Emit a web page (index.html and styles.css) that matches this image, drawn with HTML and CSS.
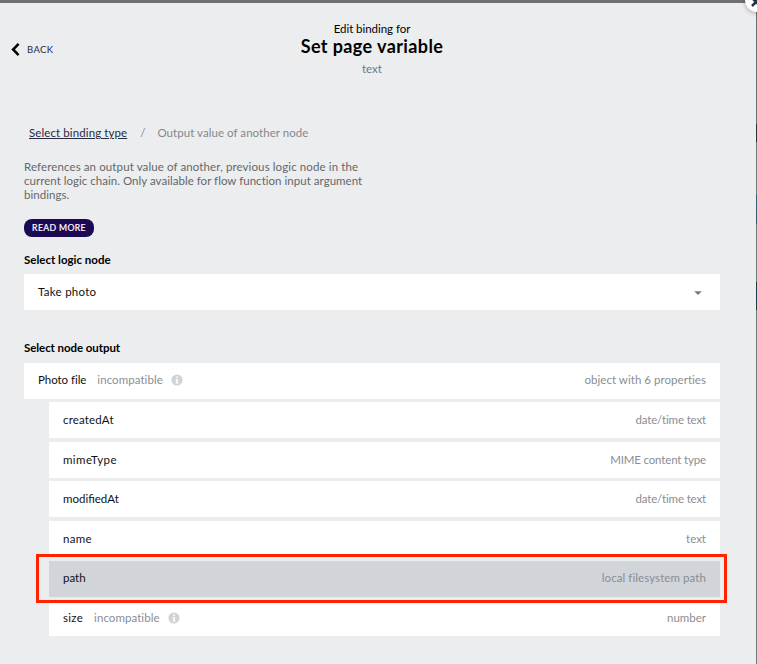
FILE: index.html
```html
<!DOCTYPE html>
<html lang="en">
<head>
<meta charset="utf-8">
<title>Edit binding</title>
<link rel="stylesheet" href="styles.css">
</head>
<body>
<div class="backdrop">
  <main class="modal">
    <header class="header">
      <a class="back"><svg class="chevron" viewBox="0 0 9 13"><path d="M7.6.9 2.1 6.5l5.5 5.6" fill="none" stroke="#000" stroke-width="2.5"/></svg><span>BACK</span></a>
      <div class="heading">
        <div class="eyebrow">Edit binding for</div>
        <h1 class="title">Set page variable</h1>
        <div class="type">text</div>
      </div>
    </header>
    <nav class="crumbs"><a class="crumb-link">Select binding type</a><span class="slash">/</span><span class="crumb-current">Output value of another node</span></nav>
    <p class="description"><span class="opening">References an output value of another, previous logic node in the</span><br>current logic chain. Only available for flow function input argument<br>bindings.</p>
    <button class="more">READ MORE</button>
    <h2 class="label">Select logic node</h2>
    <div class="select"><span class="name take">Take photo</span><svg class="caret" viewBox="0 0 8 4"><path d="M.2.2h7.6L4 4z" fill="#73757f"/></svg></div>
    <h2 class="label output-label">Select node output</h2>
    <div class="outputs">
      <div class="row parent"><span class="name photo">Photo file</span><span class="note">incompatible</span><svg class="info" viewBox="0 0 12 12"><circle cx="6" cy="6" r="5.6" fill="#d0d3d8"/><path d="M5.2 2.3h1.7v1.5H5.2zM4.6 4.9h2.3v3.5h.7v1H4.5v-1h.8V5.8h-.7z" fill="#fff"/></svg><span class="kind k-object">object with 6 properties</span></div>
      <div class="row"><span class="name created">createdAt</span><span class="kind k-date">date/time text</span></div>
      <div class="row"><span class="name mime">mimeType</span><span class="kind k-mime">MIME content type</span></div>
      <div class="row"><span class="name">modifiedAt</span><span class="kind k-date">date/time text</span></div>
      <div class="row"><span class="name short">name</span><span class="kind">text</span></div>
      <div class="row selected"><span class="name">path</span><span class="kind k-path">local filesystem path</span></div>
      <div class="row"><span class="name short">size</span><span class="note">incompatible</span><svg class="info" viewBox="0 0 12 12"><circle cx="6" cy="6" r="5.6" fill="#d0d3d8"/><path d="M5.2 2.3h1.7v1.5H5.2zM4.6 4.9h2.3v3.5h.7v1H4.5v-1h.8V5.8h-.7z" fill="#fff"/></svg><span class="kind">number</span></div>
    </div>
  </main>
  <div class="close"><svg viewBox="0 0 10 10"><path d="m1 1 8 8M9 1 1 9" stroke="#263342" stroke-width="2.5"/></svg></div>
  <div class="highlight"></div>
</div>
</body>
</html>
```

FILE: styles.css
```css
* { box-sizing: border-box; }
body { margin: 0; font: 11.5px/14px Lato, "Open Sans", sans-serif; color: #111; }
.backdrop { position: relative; height: 664px; overflow: hidden; padding: 3px 1px 0 0;
  background: linear-gradient(#707072 124px, #303036 124px 142px, #77797c 142px 195px, #326078 195px 210px, #405469 210px 224px, #77797c 224px 282px, #23384b 282px 310px, #77797c 310px); }
.modal { height: 661px; background: #ecedef; padding: 0 36px 0 24px; }
.header { position: relative; height: 123px; padding-top: 19px; }
.back { position: absolute; left: -13px; top: 40px; display: flex; align-items: center; gap: 7px; height: 13px; font-size: 9.5px; letter-spacing: .4px; color: #272a43; }
.chevron { width: 9px; height: 13px; }
.heading { width: 696px; text-align: center; }
.eyebrow { height: 14px; color: #000; letter-spacing: -.05px; }
.title { margin: 0; font-size: 18px; line-height: 20px; font-weight: 700; letter-spacing: .4px; color: #000; }
.type { margin-top: 6px; color: #68788f; }
.crumbs { display: flex; height: 14px; padding-left: 5px; color: #85878e; }
.crumb-link { color: #272c43; letter-spacing: .1px; text-decoration: underline; text-underline-offset: 1px; }
.crumb-current { letter-spacing: .05px; }
.slash { margin: 0 12px 0 13px; }
.description { margin: 20px 0 0; height: 42px; letter-spacing: .03px; color: #65676a; }
.opening { letter-spacing: .11px; }
.more { display: block; margin: 17px 0 0; width: 70px; height: 18px; padding: 0; border: 0; border-radius: 8px; background: #1c0953; color: #fff; font: 400 8.7px/18px Lato, sans-serif; letter-spacing: .35px; -webkit-text-stroke: .2px #fff; }
.label { margin: 16px 0 0; font-size: 11.5px; line-height: 14px; font-weight: 700; color: #000; }
.select { display: flex; align-items: center; justify-content: space-between; height: 36px; margin-top: 7px; padding: 0 18px 0 14px; background: #fff; }
.take { letter-spacing: .28px; }
.caret { width: 8px; height: 4px; margin-top: 1px; }
.output-label { margin-top: 31px; letter-spacing: -.07px; }
.outputs { display: flex; flex-direction: column; gap: 3.6px; margin-top: 7.6px; }
.row { display: flex; align-items: center; height: 36px; margin-left: 25px; padding: 0 14px; background: #fff; }
.row.parent { margin-left: 0; padding-bottom: 1px; }
.row.selected { background: #d1d4d9; padding-bottom: 1px; }
.photo { letter-spacing: -.05px; }
.created { letter-spacing: .15px; }
.mime { letter-spacing: .4px; }
.short { letter-spacing: .3px; }
.note { margin-left: 11px; letter-spacing: .06px; color: #8b8d94; }
.info { width: 12px; height: 12px; margin-left: 8.5px; }
.kind { margin-left: auto; color: #8b8d94; }
.k-object { letter-spacing: .04px; }
.k-date { letter-spacing: -.15px; }
.k-mime { letter-spacing: -.16px; }
.k-path { letter-spacing: .08px; }
.close { position: absolute; left: 745px; top: -12px; width: 24px; height: 24px; border-radius: 50%; background: #fff; box-shadow: 0 1px 5px rgba(0,0,0,.3); }
.close svg { position: absolute; left: 6px; top: 9px; width: 10px; height: 10px; }
.highlight { position: absolute; left: 36px; top: 554px; width: 691px; height: 49px; border: 3px solid #ff2300; }
```
